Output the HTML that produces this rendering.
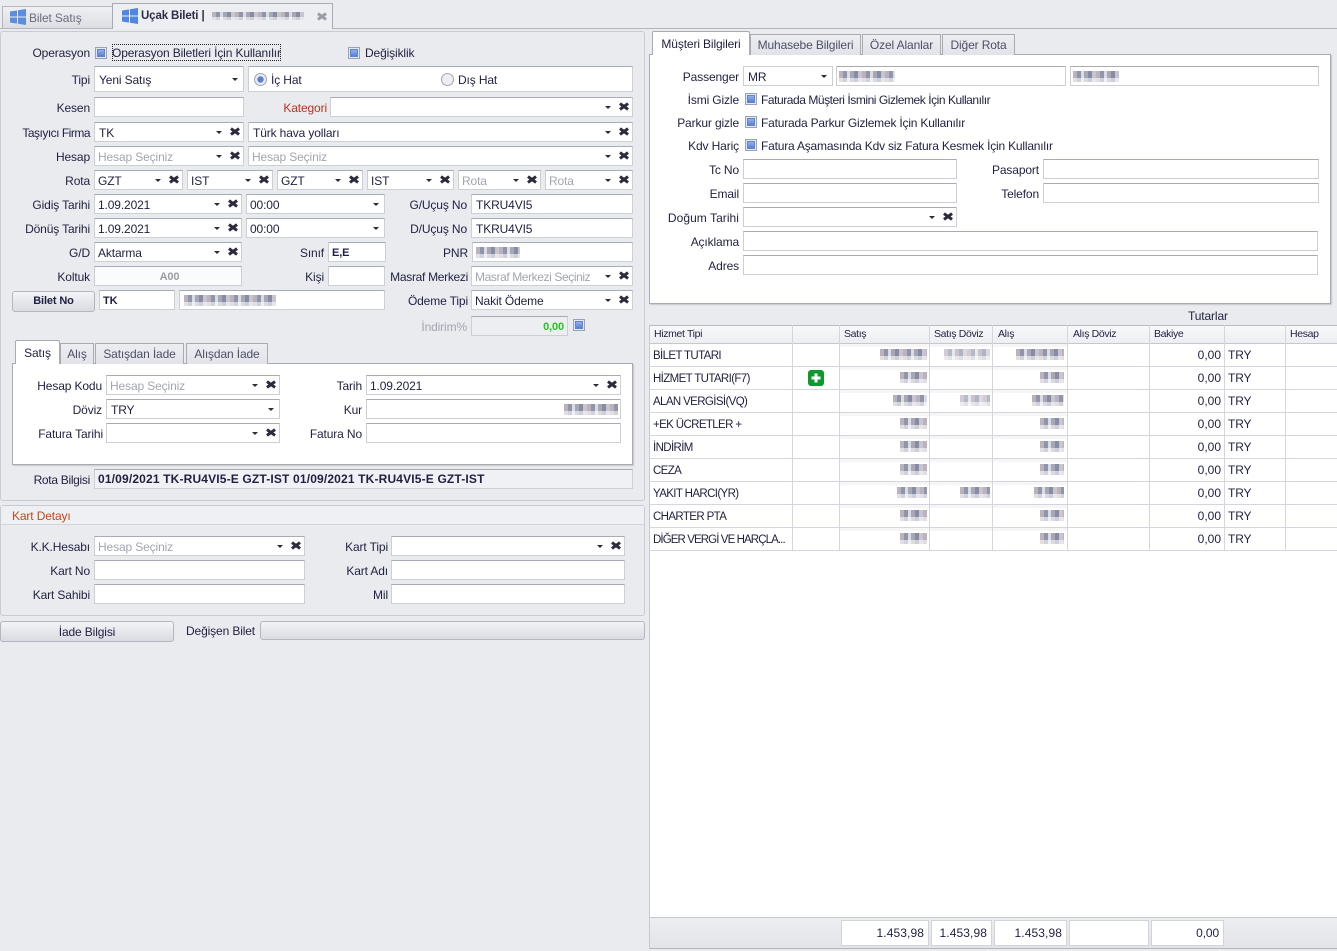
<!DOCTYPE html>
<html><head><meta charset="utf-8"><style>
html,body{margin:0;padding:0}
body{width:1337px;height:951px;overflow:hidden;position:relative;background:#e9ebef;font:12px/18px "Liberation Sans",sans-serif;color:#1f2040;letter-spacing:-.13px}
div,span{box-sizing:border-box}
.l{position:absolute;text-align:right;white-space:nowrap;height:18px;line-height:20px}
.t{position:absolute;white-space:nowrap;height:18px;line-height:20px}
.f{position:absolute;height:20px;background:#fff;border:1px solid #cdcfd6;border-top-color:#a9abb4;padding-left:3px;line-height:20px;white-space:nowrap;overflow:hidden}
.g{color:#a3a5b0}
.a{position:absolute;right:21px;top:8px;width:0;height:0;border:3px solid transparent;border-top:3px solid #2b2b3c;border-bottom:0}
.n{right:5px}
.x{position:absolute;right:4px;top:5px;width:9px;height:7px}
.x:before,.x:after{content:"";position:absolute;left:-.5px;top:2px;width:10px;height:3px;background:#2b2b3c;transform:rotate(36deg)}
.x:after{transform:rotate(-36deg)}
.x.q:before,.x.q:after{background:#9a9ca6}
.c{position:absolute;width:12px;height:12px;border:1px solid #98a2b8;background:#e4e8f1}
.c:after{content:"";position:absolute;left:1px;top:1px;width:8px;height:8px;background:linear-gradient(#9db8ec,#4f78d2);border:0;box-shadow:inset 0 0 0 1px #5f84d2}
.p{position:absolute;border:1px solid #c9cbd2;border-radius:3px}
.tab{position:absolute;height:21px;background:linear-gradient(#eceef2,#e1e3e8);border:1px solid #a9abb3;border-bottom:0;text-align:center;line-height:20px;color:#4d4f66}
.ta{background:#fff;color:#1f2040;height:24px;line-height:24px;z-index:2;border-radius:2px 2px 0 0}
.w{position:absolute;background:#fff;border:1px solid #a9abb3;box-shadow:1px 1px 1px #c6c8ce}
.b{position:absolute;height:11px;background:linear-gradient(rgba(255,255,255,.05) 0 65%,rgba(255,255,255,.6) 65%),repeating-linear-gradient(90deg,#b6aeb8 0 4px,#8a8fa6 4px 8px,#d6dbe4 8px 11px,#a5a2b0 11px 15px,#7f86a0 15px 19px,#c6c2cc 19px 23px)}
.btn{position:absolute;background:linear-gradient(#f3f4f7,#d9dbe1);border:1px solid #b4b6bf;border-radius:3px;text-align:center}
.v{position:absolute;top:325px;width:1px;height:226px;background:#d4d6dd}
.h{position:absolute;left:649px;width:688px;height:1px;background:#d4d6dd}
.hd{position:absolute;top:325px;font-size:10.5px;line-height:18px;white-space:nowrap;letter-spacing:-.35px}
.ro{position:absolute;left:653px;font-size:11.5px;line-height:20px;white-space:nowrap;height:18px;letter-spacing:-.62px}
.z{position:absolute;left:1171px;width:50px;text-align:right;height:18px;letter-spacing:0}
.y{position:absolute;left:1228px;height:18px}
.s{position:absolute;top:920px;height:26px;background:#fff;border:1px solid #d2d4da;text-align:right;padding-right:4px;line-height:25px}
</style></head><body>

<!-- doc tabs -->
<div style="position:absolute;left:0;top:28px;width:1337px;height:1px;background:#b4b6bd"></div>
<div style="position:absolute;left:2px;top:6px;width:111px;height:22px;background:linear-gradient(#eef0f3,#dcdee3);border:1px solid #b4b6bd;border-bottom:0"></div>
<div style="position:absolute;left:112px;top:3px;width:221px;height:26px;background:#eceef1;border:1px solid #a9abb3;border-bottom:0"></div>
<svg style="position:absolute;left:10px;top:9px" width="16" height="16" viewBox="0 0 16 16"><path fill="#5b8ee0" d="M0 2.5 7 1.5V7.5H0ZM8 1.3 16 0V7.5H8ZM0 8.5H7V14.6L0 13.5ZM8 8.5H16V16L8 14.7Z"/></svg>
<svg style="position:absolute;left:122px;top:8px" width="16" height="16" viewBox="0 0 16 16"><path fill="#4f86e2" d="M0 2.5 7 1.5V7.5H0ZM8 1.3 16 0V7.5H8ZM0 8.5H7V14.6L0 13.5ZM8 8.5H16V16L8 14.7Z"/></svg>
<div class="t" style="left:29px;top:8px;color:#6a6c80">Bilet Satış</div>
<div class="t" style="left:141px;top:6px;font-weight:bold;font-size:11.5px;color:#2a2b45">Uçak Bileti | </div>
<div class="b" style="left:212px;top:12px;width:92px;height:8px"></div>
<div class="x q" style="left:317px;top:13px;right:auto"></div>

<!-- left main panel -->
<div class="p" style="left:0;top:31px;width:645px;height:470px"></div>
<div class="l" style="left:0;width:90px;top:43px">Operasyon</div>
<div class="c" style="left:95px;top:47px"></div>
<div class="t" style="left:112px;top:44px;height:17px;line-height:18px;outline:1px dotted #222;outline-offset:-1px;width:169px">Operasyon Biletleri İçin Kullanılır</div>
<div class="c" style="left:348px;top:47px"></div>
<div class="t" style="left:365px;top:43px">Değişiklik</div>

<div class="l" style="left:0;width:90px;top:70px">Tipi</div>
<div class="f" style="left:94px;top:66px;width:150px;height:26px;line-height:26px;padding-left:4px">Yeni Satış<i class="a n" style="top:11px"></i></div>
<div class="f" style="left:248px;top:66px;width:385px;height:26px"></div>
<svg style="position:absolute;left:254px;top:73px" width="13" height="13"><circle cx="6.5" cy="6.5" r="6" fill="#e8eaf0" stroke="#a2a6b2"/><circle cx="6.5" cy="6.5" r="3.2" fill="#5c80cc"/></svg>
<div class="t" style="left:271px;top:70px">İç Hat</div>
<svg style="position:absolute;left:441px;top:73px" width="13" height="13"><circle cx="6.5" cy="6.5" r="6" fill="#eceef2" stroke="#a2a6b2"/></svg>
<div class="t" style="left:458px;top:70px">Dış Hat</div>

<div class="l" style="left:0;width:90px;top:98px">Kesen</div>
<div class="f" style="left:94px;top:97px;width:150px"></div>
<div class="l" style="left:260px;width:67px;top:98px;color:#c0311e">Kategori</div>
<div class="f" style="left:330px;top:97px;width:303px"><i class="a"></i><b class="x"></b></div>

<div class="l" style="left:0;width:90px;top:123px;letter-spacing:-.5px">Taşıyıcı Firma</div>
<div class="f" style="left:94px;top:122px;width:150px;padding-left:4px">TK<i class="a"></i><b class="x"></b></div>
<div class="f" style="left:248px;top:122px;width:385px;padding-left:4px">Türk hava yolları<i class="a"></i><b class="x"></b></div>

<div class="l" style="left:0;width:90px;top:147px">Hesap</div>
<div class="f g" style="left:94px;top:146px;width:150px">Hesap Seçiniz<i class="a"></i><b class="x"></b></div>
<div class="f g" style="left:248px;top:146px;width:385px">Hesap Seçiniz<i class="a"></i><b class="x"></b></div>

<div class="l" style="left:0;width:90px;top:171px">Rota</div>
<div class="f" style="left:94px;top:170px;width:89px">GZT<i class="a"></i><b class="x"></b></div>
<div class="f" style="left:187px;top:170px;width:86px">IST<i class="a"></i><b class="x"></b></div>
<div class="f" style="left:277px;top:170px;width:86px">GZT<i class="a"></i><b class="x"></b></div>
<div class="f" style="left:367px;top:170px;width:87px">IST<i class="a"></i><b class="x"></b></div>
<div class="f g" style="left:458px;top:170px;width:83px">Rota<i class="a"></i><b class="x"></b></div>
<div class="f g" style="left:545px;top:170px;width:88px">Rota<i class="a"></i><b class="x"></b></div>

<div class="l" style="left:0;width:90px;top:195px">Gidiş Tarihi</div>
<div class="f" style="left:94px;top:194px;width:148px">1.09.2021<i class="a"></i><b class="x"></b></div>
<div class="f" style="left:246px;top:194px;width:139px">00:00<i class="a n"></i></div>
<div class="l" style="left:385px;width:82px;top:195px">G/Uçuş No</div>
<div class="f" style="left:471px;top:194px;width:162px;padding-left:4px">TKRU4VI5</div>

<div class="l" style="left:0;width:90px;top:219px">Dönüş Tarihi</div>
<div class="f" style="left:94px;top:218px;width:148px">1.09.2021<i class="a"></i><b class="x"></b></div>
<div class="f" style="left:246px;top:218px;width:139px">00:00<i class="a n"></i></div>
<div class="l" style="left:385px;width:82px;top:219px">D/Uçuş No</div>
<div class="f" style="left:471px;top:218px;width:162px;padding-left:4px">TKRU4VI5</div>

<div class="l" style="left:0;width:90px;top:243px">G/D</div>
<div class="f" style="left:94px;top:242px;width:148px">Aktarma<i class="a"></i><b class="x"></b></div>
<div class="l" style="left:280px;width:44px;top:243px">Sınıf</div>
<div class="f" style="left:328px;top:242px;width:58px;font-weight:bold;font-size:11px">E,E</div>
<div class="l" style="left:400px;width:68px;top:243px">PNR</div>
<div class="f" style="left:472px;top:242px;width:161px"><span class="b" style="left:3px;top:4px;width:44px"></span></div>

<div class="l" style="left:0;width:90px;top:267px">Koltuk</div>
<div class="f" style="left:94px;top:266px;width:148px;text-align:center;font-weight:bold;font-size:11px;color:#9a9ca6;background:#fafbfc">A00</div>
<div class="l" style="left:280px;width:44px;top:267px">Kişi</div>
<div class="f" style="left:328px;top:266px;width:57px"></div>
<div class="l" style="left:380px;width:88px;top:267px;letter-spacing:-.3px">Masraf Merkezi</div>
<div class="f g" style="left:471px;top:266px;width:162px;letter-spacing:-.4px">Masraf Merkezi Seçiniz<i class="a"></i><b class="x"></b></div>

<div class="btn" style="left:12px;top:291px;width:83px;height:21px;font-weight:bold;font-size:11px;line-height:19px">Bilet No</div>
<div class="f" style="left:99px;top:290px;width:76px;font-weight:bold;font-size:11px">TK</div>
<div class="f" style="left:179px;top:290px;width:206px"><span class="b" style="left:4px;top:4px;width:92px"></span></div>
<div class="l" style="left:385px;width:83px;top:291px">Ödeme Tipi</div>
<div class="f" style="left:471px;top:290px;width:162px">Nakit Ödeme<i class="a"></i><b class="x"></b></div>

<div class="l" style="left:385px;width:82px;top:317px;color:#a3a5b0">İndirim%</div>
<div class="f" style="left:471px;top:316px;width:97px;background:#eceef1;text-align:right;padding-right:3px;color:#22c822;font-weight:bold;font-size:11px">0,00</div>
<div class="c" style="left:573px;top:319px"></div>

<!-- sub tabs -->
<div class="w" style="left:12px;top:363px;width:621px;height:102px"></div>
<div class="tab ta" style="left:15px;top:340px;width:45px">Satış</div>
<div class="tab" style="left:60px;top:343px;width:34px">Alış</div>
<div class="tab" style="left:95px;top:343px;width:89px">Satışdan İade</div>
<div class="tab" style="left:186px;top:343px;width:82px">Alışdan İade</div>

<div class="l" style="left:12px;width:90px;top:376px">Hesap Kodu</div>
<div class="f g" style="left:106px;top:375px;width:174px">Hesap Seçiniz<i class="a"></i><b class="x"></b></div>
<div class="l" style="left:12px;width:90px;top:400px">Döviz</div>
<div class="f" style="left:106px;top:399px;width:174px;padding-left:4px">TRY<i class="a n"></i></div>
<div class="l" style="left:12px;width:91px;top:424px">Fatura Tarihi</div>
<div class="f" style="left:106px;top:423px;width:174px"><i class="a"></i><b class="x"></b></div>
<div class="l" style="left:290px;width:72px;top:376px">Tarih</div>
<div class="f" style="left:366px;top:375px;width:255px">1.09.2021<i class="a"></i><b class="x"></b></div>
<div class="l" style="left:290px;width:72px;top:400px">Kur</div>
<div class="f" style="left:366px;top:399px;width:255px"><span class="b" style="right:2px;top:4px;width:54px"></span></div>
<div class="l" style="left:290px;width:72px;top:424px">Fatura No</div>
<div class="f" style="left:366px;top:423px;width:255px"></div>

<div class="l" style="left:0;width:90px;top:470px;letter-spacing:-.3px">Rota Bilgisi</div>
<div class="f" style="left:94px;top:469px;width:539px;background:#f0f1f4;font-weight:bold;font-size:12px;letter-spacing:.16px;padding-left:3px;line-height:19px">01/09/2021 TK-RU4VI5-E GZT-IST 01/09/2021 TK-RU4VI5-E GZT-IST</div>

<!-- kart -->
<div class="p" style="left:0;top:505px;width:645px;height:111px"></div>
<div style="position:absolute;left:1px;top:506px;width:643px;height:19px;background:#eef0f3;border-bottom:1px solid #d2d4da"></div>
<div class="t" style="left:12px;top:506px;color:#c24a1c">Kart Detayı</div>
<div class="l" style="left:0;width:90px;top:537px">K.K.Hesabı</div>
<div class="f g" style="left:94px;top:536px;width:211px">Hesap Seçiniz<i class="a"></i><b class="x"></b></div>
<div class="l" style="left:0;width:90px;top:561px">Kart No</div>
<div class="f" style="left:94px;top:560px;width:211px"></div>
<div class="l" style="left:0;width:90px;top:585px">Kart Sahibi</div>
<div class="f" style="left:94px;top:584px;width:211px"></div>
<div class="l" style="left:310px;width:78px;top:537px">Kart Tipi</div>
<div class="f" style="left:391px;top:536px;width:234px"><i class="a"></i><b class="x"></b></div>
<div class="l" style="left:310px;width:78px;top:561px">Kart Adı</div>
<div class="f" style="left:391px;top:560px;width:234px"></div>
<div class="l" style="left:310px;width:78px;top:585px">Mil</div>
<div class="f" style="left:391px;top:584px;width:234px"></div>

<div class="btn" style="left:0;top:621px;width:174px;height:21px;line-height:21px">İade Bilgisi</div>
<div class="t" style="left:186px;top:621px">Değişen Bilet</div>
<div class="btn" style="left:260px;top:621px;width:385px;height:19px"></div>

<!-- right -->
<div class="w" style="left:649px;top:54px;width:682px;height:250px"></div>
<div class="tab ta" style="left:652px;top:31px;width:98px">Müşteri Bilgileri</div>
<div class="tab" style="left:750px;top:34px;width:111px">Muhasebe Bilgileri</div>
<div class="tab" style="left:862px;top:34px;width:79px">Özel Alanlar</div>
<div class="tab" style="left:942px;top:34px;width:73px">Diğer Rota</div>

<div class="l" style="left:650px;width:89px;top:67px">Passenger</div>
<div class="f" style="left:743px;top:66px;width:90px;border-color:#cdcfd6;padding-left:4px">MR<i class="a n"></i></div>
<div class="f" style="left:836px;top:66px;width:230px"><span class="b" style="left:2px;top:4px;width:56px"></span></div>
<div class="f" style="left:1070px;top:66px;width:249px"><span class="b" style="left:2px;top:4px;width:46px"></span></div>

<div class="l" style="left:650px;width:89px;top:90px">İsmi Gizle</div>
<div class="c" style="left:745px;top:93px"></div>
<div class="t" style="left:761px;top:90px;letter-spacing:-.45px">Faturada Müşteri İsmini Gizlemek İçin Kullanılır</div>
<div class="l" style="left:650px;width:89px;top:113px">Parkur gizle</div>
<div class="c" style="left:745px;top:116px"></div>
<div class="t" style="left:761px;top:113px;letter-spacing:-.2px">Faturada Parkur Gizlemek İçin Kullanılır</div>
<div class="l" style="left:650px;width:89px;top:136px">Kdv Hariç</div>
<div class="c" style="left:745px;top:139px"></div>
<div class="t" style="left:761px;top:136px;letter-spacing:-.2px">Fatura Aşamasında Kdv siz Fatura Kesmek İçin Kullanılır</div>

<div class="l" style="left:650px;width:89px;top:160px">Tc No</div>
<div class="f" style="left:743px;top:159px;width:214px"></div>
<div class="l" style="left:960px;width:79px;top:160px">Pasaport</div>
<div class="f" style="left:1043px;top:159px;width:276px"></div>
<div class="l" style="left:650px;width:89px;top:184px">Email</div>
<div class="f" style="left:743px;top:183px;width:214px"></div>
<div class="l" style="left:960px;width:79px;top:184px">Telefon</div>
<div class="f" style="left:1043px;top:183px;width:276px"></div>
<div class="l" style="left:650px;width:89px;top:208px;letter-spacing:.05px">Doğum Tarihi</div>
<div class="f" style="left:743px;top:207px;width:214px"><i class="a"></i><b class="x"></b></div>
<div class="l" style="left:650px;width:89px;top:232px">Açıklama</div>
<div class="f" style="left:743px;top:231px;width:575px"></div>
<div class="l" style="left:650px;width:89px;top:256px">Adres</div>
<div class="f" style="left:743px;top:255px;width:575px"></div>

<div class="t" style="left:1188px;top:306px">Tutarlar</div>

<!-- grid -->
<div style="position:absolute;left:649px;top:325px;width:688px;height:593px;background:#fff;border-left:1px solid #c6c8cf"></div>
<div style="position:absolute;left:840px;top:344px;width:227px;height:207px;background:repeating-linear-gradient(180deg,#f6f6f7 0 3px,transparent 3px 23px)"></div>
<div style="position:absolute;left:650px;top:325px;width:687px;height:18px;background:linear-gradient(#f8f9fb,#eceef1);border-top:1px solid #b9bbc3"></div>
<div class="h" style="top:343px;background:#c6c8cf"></div>
<div class="h" style="top:366px"></div><div class="h" style="top:389px"></div><div class="h" style="top:412px"></div><div class="h" style="top:435px"></div><div class="h" style="top:458px"></div><div class="h" style="top:481px"></div><div class="h" style="top:504px"></div><div class="h" style="top:527px"></div><div class="h" style="top:550px"></div>
<div class="v" style="left:792px"></div><div class="v" style="left:839px"></div><div class="v" style="left:929px"></div><div class="v" style="left:992px"></div><div class="v" style="left:1067px"></div><div class="v" style="left:1149px"></div><div class="v" style="left:1224px"></div><div class="v" style="left:1285px"></div>
<div class="hd" style="left:654px">Hizmet Tipi</div><div class="hd" style="left:844px">Satış</div><div class="hd" style="left:934px">Satış Döviz</div><div class="hd" style="left:998px">Alış</div><div class="hd" style="left:1073px">Alış Döviz</div><div class="hd" style="left:1154px">Bakiye</div><div class="hd" style="left:1290px">Hesap</div>

<div class="ro" style="top:346px">BİLET TUTARI</div><div class="ro" style="top:369px">HİZMET TUTARI(F7)</div><div class="ro" style="top:392px">ALAN VERGİSİ(VQ)</div><div class="ro" style="top:415px">+EK ÜCRETLER +</div><div class="ro" style="top:438px">İNDİRİM</div><div class="ro" style="top:461px">CEZA</div><div class="ro" style="top:484px">YAKIT HARCI(YR)</div><div class="ro" style="top:507px">CHARTER PTA</div><div class="ro" style="top:530px;letter-spacing:-.9px">DİĞER VERGİ VE HARÇLA...</div>

<svg style="position:absolute;left:808px;top:370px" width="16" height="16"><rect width="16" height="16" rx="3" fill="#0c9a2c"/><path d="M8 3.5V12.5M3.5 8H12.5" stroke="#fff" stroke-width="3"/></svg>

<div class="z" style="top:346px">0,00</div><div class="z" style="top:369px">0,00</div><div class="z" style="top:392px">0,00</div><div class="z" style="top:415px">0,00</div><div class="z" style="top:438px">0,00</div><div class="z" style="top:461px">0,00</div><div class="z" style="top:484px">0,00</div><div class="z" style="top:507px">0,00</div><div class="z" style="top:530px">0,00</div>
<div class="y" style="top:346px">TRY</div><div class="y" style="top:369px">TRY</div><div class="y" style="top:392px">TRY</div><div class="y" style="top:415px">TRY</div><div class="y" style="top:438px">TRY</div><div class="y" style="top:461px">TRY</div><div class="y" style="top:484px">TRY</div><div class="y" style="top:507px">TRY</div><div class="y" style="top:530px">TRY</div>

<!-- blurred values -->
<div class="b" style="left:880px;top:349px;width:47px"></div><div class="b" style="left:944px;top:349px;width:46px;opacity:.65"></div><div class="b" style="left:1016px;top:349px;width:48px"></div>
<div class="b" style="left:900px;top:372px;width:27px"></div><div class="b" style="left:1040px;top:372px;width:24px"></div>
<div class="b" style="left:893px;top:395px;width:34px"></div><div class="b" style="left:960px;top:395px;width:30px;opacity:.65"></div><div class="b" style="left:1032px;top:395px;width:32px"></div>
<div class="b" style="left:900px;top:418px;width:27px"></div><div class="b" style="left:1040px;top:418px;width:24px"></div>
<div class="b" style="left:900px;top:441px;width:27px"></div><div class="b" style="left:1040px;top:441px;width:24px"></div>
<div class="b" style="left:900px;top:464px;width:27px"></div><div class="b" style="left:1040px;top:464px;width:24px"></div>
<div class="b" style="left:897px;top:487px;width:30px"></div><div class="b" style="left:960px;top:487px;width:30px"></div><div class="b" style="left:1034px;top:487px;width:30px"></div>
<div class="b" style="left:900px;top:510px;width:27px"></div><div class="b" style="left:1040px;top:510px;width:24px"></div>
<div class="b" style="left:900px;top:533px;width:27px"></div><div class="b" style="left:1040px;top:533px;width:24px"></div>

<!-- footer -->
<div style="position:absolute;left:649px;top:917px;width:688px;height:32px;background:linear-gradient(#eceef1,#e2e4e9);border-top:1px solid #c6c8cf;border-bottom:1px solid #b4b6bd;border-left:1px solid #c6c8cf"></div>
<div class="s" style="left:841px;width:88px;letter-spacing:.1px">1.453,98</div>
<div class="s" style="left:931px;width:61px;letter-spacing:.1px">1.453,98</div>
<div class="s" style="left:994px;width:73px;letter-spacing:.1px">1.453,98</div>
<div class="s" style="left:1069px;width:80px"></div>
<div class="s" style="left:1151px;width:73px">0,00</div>
</body></html>
